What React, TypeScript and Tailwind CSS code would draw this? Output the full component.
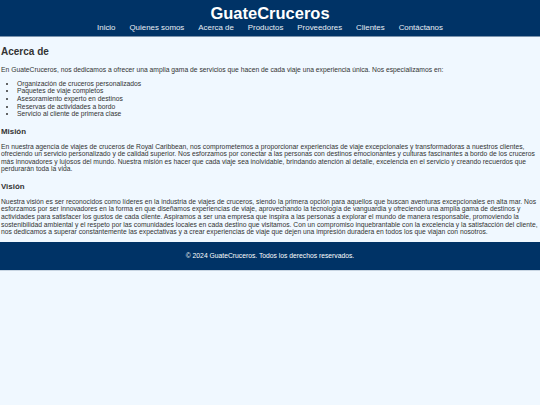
const NAV = ['Inicio', 'Quienes somos', 'Acerca de', 'Productos', 'Proveedores', 'Clientes', 'Contáctanos'];

const SERVICES = [
  'Organización de cruceros personalizados',
  'Paquetes de viaje completos',
  'Asesoramiento experto en destinos',
  'Reservas de actividades a bordo',
  'Servicio al cliente de primera clase',
];

export default function App() {
  return (
    <div className="min-h-[405px] bg-[#f0f8ff] text-[#333] text-[6.75px] leading-[1.12] font-['Liberation_Sans',Arial,sans-serif]">
      <header className="bg-[#003366] text-white text-center pt-[4px] pb-[3px] border-b border-[#7a93ad]">
        <h1 className="text-[16.5px] font-bold leading-[1.15]">GuateCruceros</h1>
        <nav className="flex justify-center gap-[14px] text-[7.9px] mt-[1px] text-[#e8eef5]">
          {NAV.map((item) => (
            <a key={item} href="#" className="hover:underline">
              {item}
            </a>
          ))}
        </nav>
      </header>

      <main className="px-[1px] pt-[9px] pb-[6px]">
        <h2 className="text-[10px] font-bold leading-[1.15] mb-[9px]">Acerca de</h2>
        <p className="mb-[6px]">
          En GuateCruceros, nos dedicamos a ofrecer una amplia gama de servicios que hacen de cada viaje una experiencia única. Nos especializamos en:
        </p>
        <ul className="list-disc pl-[16px]">
          {SERVICES.map((s) => (
            <li key={s}>{s}</li>
          ))}
        </ul>

        <h3 className="text-[7.9px] font-bold leading-[1.15] mt-[9px] mb-[7px]">Misión</h3>
        <p className="mb-[6px]">
          En nuestra agencia de viajes de cruceros de Royal Caribbean, nos comprometemos a proporcionar experiencias de viaje excepcionales y transformadoras a nuestros clientes, ofreciendo un servicio personalizado y de calidad superior. Nos esforzamos por conectar a las personas con destinos emocionantes y culturas fascinantes a bordo de los cruceros más innovadores y lujosos del mundo. Nuestra misión es hacer que cada viaje sea inolvidable, brindando atención al detalle, excelencia en el servicio y creando recuerdos que perdurarán toda la vida.
        </p>

        <h3 className="text-[7.9px] font-bold leading-[1.15] mt-[9px] mb-[7px]">Visión</h3>
        <p>
          Nuestra visión es ser reconocidos como líderes en la industria de viajes de cruceros, siendo la primera opción para aquellos que buscan aventuras excepcionales en alta mar. Nos esforzamos por ser innovadores en la forma en que diseñamos experiencias de viaje, aprovechando la tecnología de vanguardia y ofreciendo una amplia gama de destinos y actividades para satisfacer los gustos de cada cliente. Aspiramos a ser una empresa que inspira a las personas a explorar el mundo de manera responsable, promoviendo la sostenibilidad ambiental y el respeto por las comunidades locales en cada destino que visitamos. Con un compromiso inquebrantable con la excelencia y la satisfacción del cliente, nos dedicamos a superar constantemente las expectativas y a crear experiencias de viaje que dejen una impresión duradera en todos los que viajan con nosotros.
        </p>
      </main>

      <footer className="bg-[#003366] text-white text-center py-[10.5px] border-b border-[#c9d6e3]">
        <p>© 2024 GuateCruceros. Todos los derechos reservados.</p>
      </footer>
    </div>
  );
}
